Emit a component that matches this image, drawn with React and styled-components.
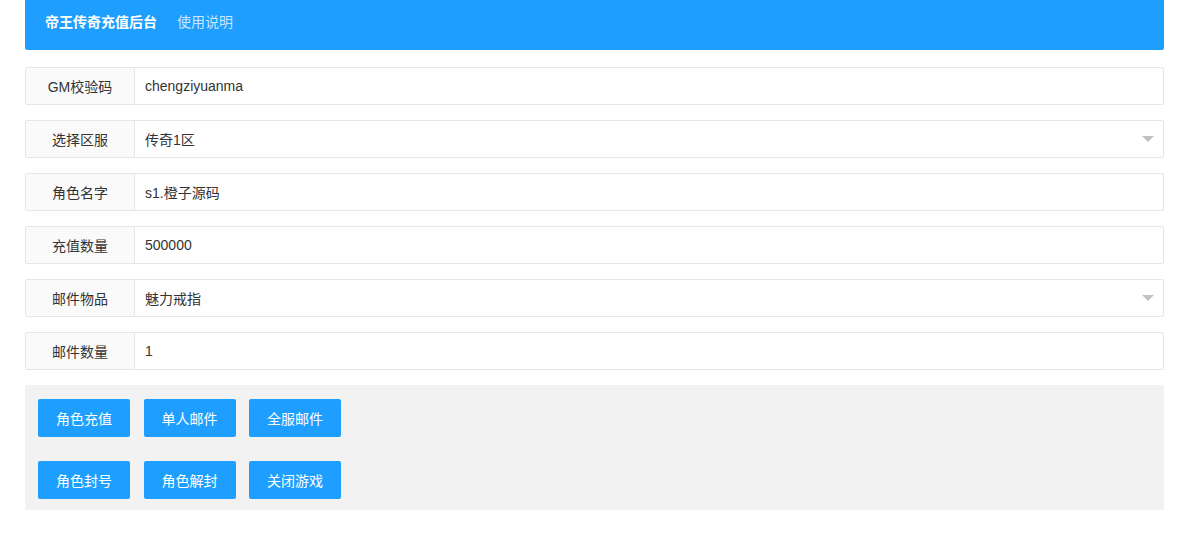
import React from "react";
import styled, { createGlobalStyle } from "styled-components";

const Global = createGlobalStyle`
  html, body { margin: 0; padding: 0; background: #fff; }
  body { font-family: "Liberation Sans", "Noto Sans CJK SC", sans-serif; font-size: 14px; color: #333; }
  * { box-sizing: border-box; }
`;

const Page = styled.div`
  padding: 0 19px 30px 25px;
`;

const Header = styled.div`
  height: 50px;
  background: #1e9fff;
  border-radius: 0 0 2px 2px;
  display: flex;
  align-items: center;
  gap: 20px;
  padding: 0 0 8px 20px;
`;

const NavItem = styled.span`
  font-size: 14px;
  color: ${(p) => (p.$active ? "#fff" : "rgba(255,255,255,0.75)")};
  font-weight: ${(p) => (p.$active ? 700 : 400)};
`;

const Form = styled.div`
  margin-top: 17px;
  display: flex;
  flex-direction: column;
  gap: 15px;
`;

const Row = styled.div`
  display: flex;
  height: 38px;
  border: 1px solid #e6e6e6;
  border-radius: 2px;
`;

const Label = styled.div`
  width: 109px;
  flex: none;
  background: #fafafa;
  border-right: 1px solid #e6e6e6;
  display: flex;
  align-items: center;
  justify-content: center;
  color: #333;
`;

const Field = styled.div`
  flex: 1;
  position: relative;
  display: flex;
  align-items: center;
  padding-left: 10px;
  color: #333;
`;

const Arrow = styled.span`
  position: absolute;
  right: 9px;
  top: 50%;
  margin-top: -3px;
  width: 0;
  height: 0;
  border-left: 6px solid transparent;
  border-right: 6px solid transparent;
  border-top: 6px solid #c2c2c2;
`;

const Panel = styled.div`
  margin-top: 15px;
  background: #f2f2f2;
  padding: 14px 13px 11px;
  display: flex;
  flex-direction: column;
  gap: 24px;
`;

const BtnRow = styled.div`
  display: flex;
  gap: 13.5px;
`;

const Btn = styled.button`
  height: 38px;
  padding: 0 18px;
  border: none;
  border-radius: 2px;
  background: #1e9fff;
  color: #fff;
  font-family: inherit;
  font-size: 14px;
  cursor: pointer;
`;

const fields = [
  { label: "GM校验码", value: "chengziyuanma" },
  { label: "选择区服", value: "传奇1区", select: true },
  { label: "角色名字", value: "s1.橙子源码" },
  { label: "充值数量", value: "500000" },
  { label: "邮件物品", value: "魅力戒指", select: true },
  { label: "邮件数量", value: "1" },
];

const buttons = [
  ["角色充值", "单人邮件", "全服邮件"],
  ["角色封号", "角色解封", "关闭游戏"],
];

export default function App() {
  return (
    <>
      <Global />
      <Page>
        <Header>
          <NavItem $active>帝王传奇充值后台</NavItem>
          <NavItem>使用说明</NavItem>
        </Header>
        <Form>
          {fields.map((f) => (
            <Row key={f.label}>
              <Label>{f.label}</Label>
              <Field>
                {f.value}
                {f.select && <Arrow />}
              </Field>
            </Row>
          ))}
        </Form>
        <Panel>
          {buttons.map((row, i) => (
            <BtnRow key={i}>
              {row.map((b) => (
                <Btn key={b}>{b}</Btn>
              ))}
            </BtnRow>
          ))}
        </Panel>
      </Page>
    </>
  );
}
